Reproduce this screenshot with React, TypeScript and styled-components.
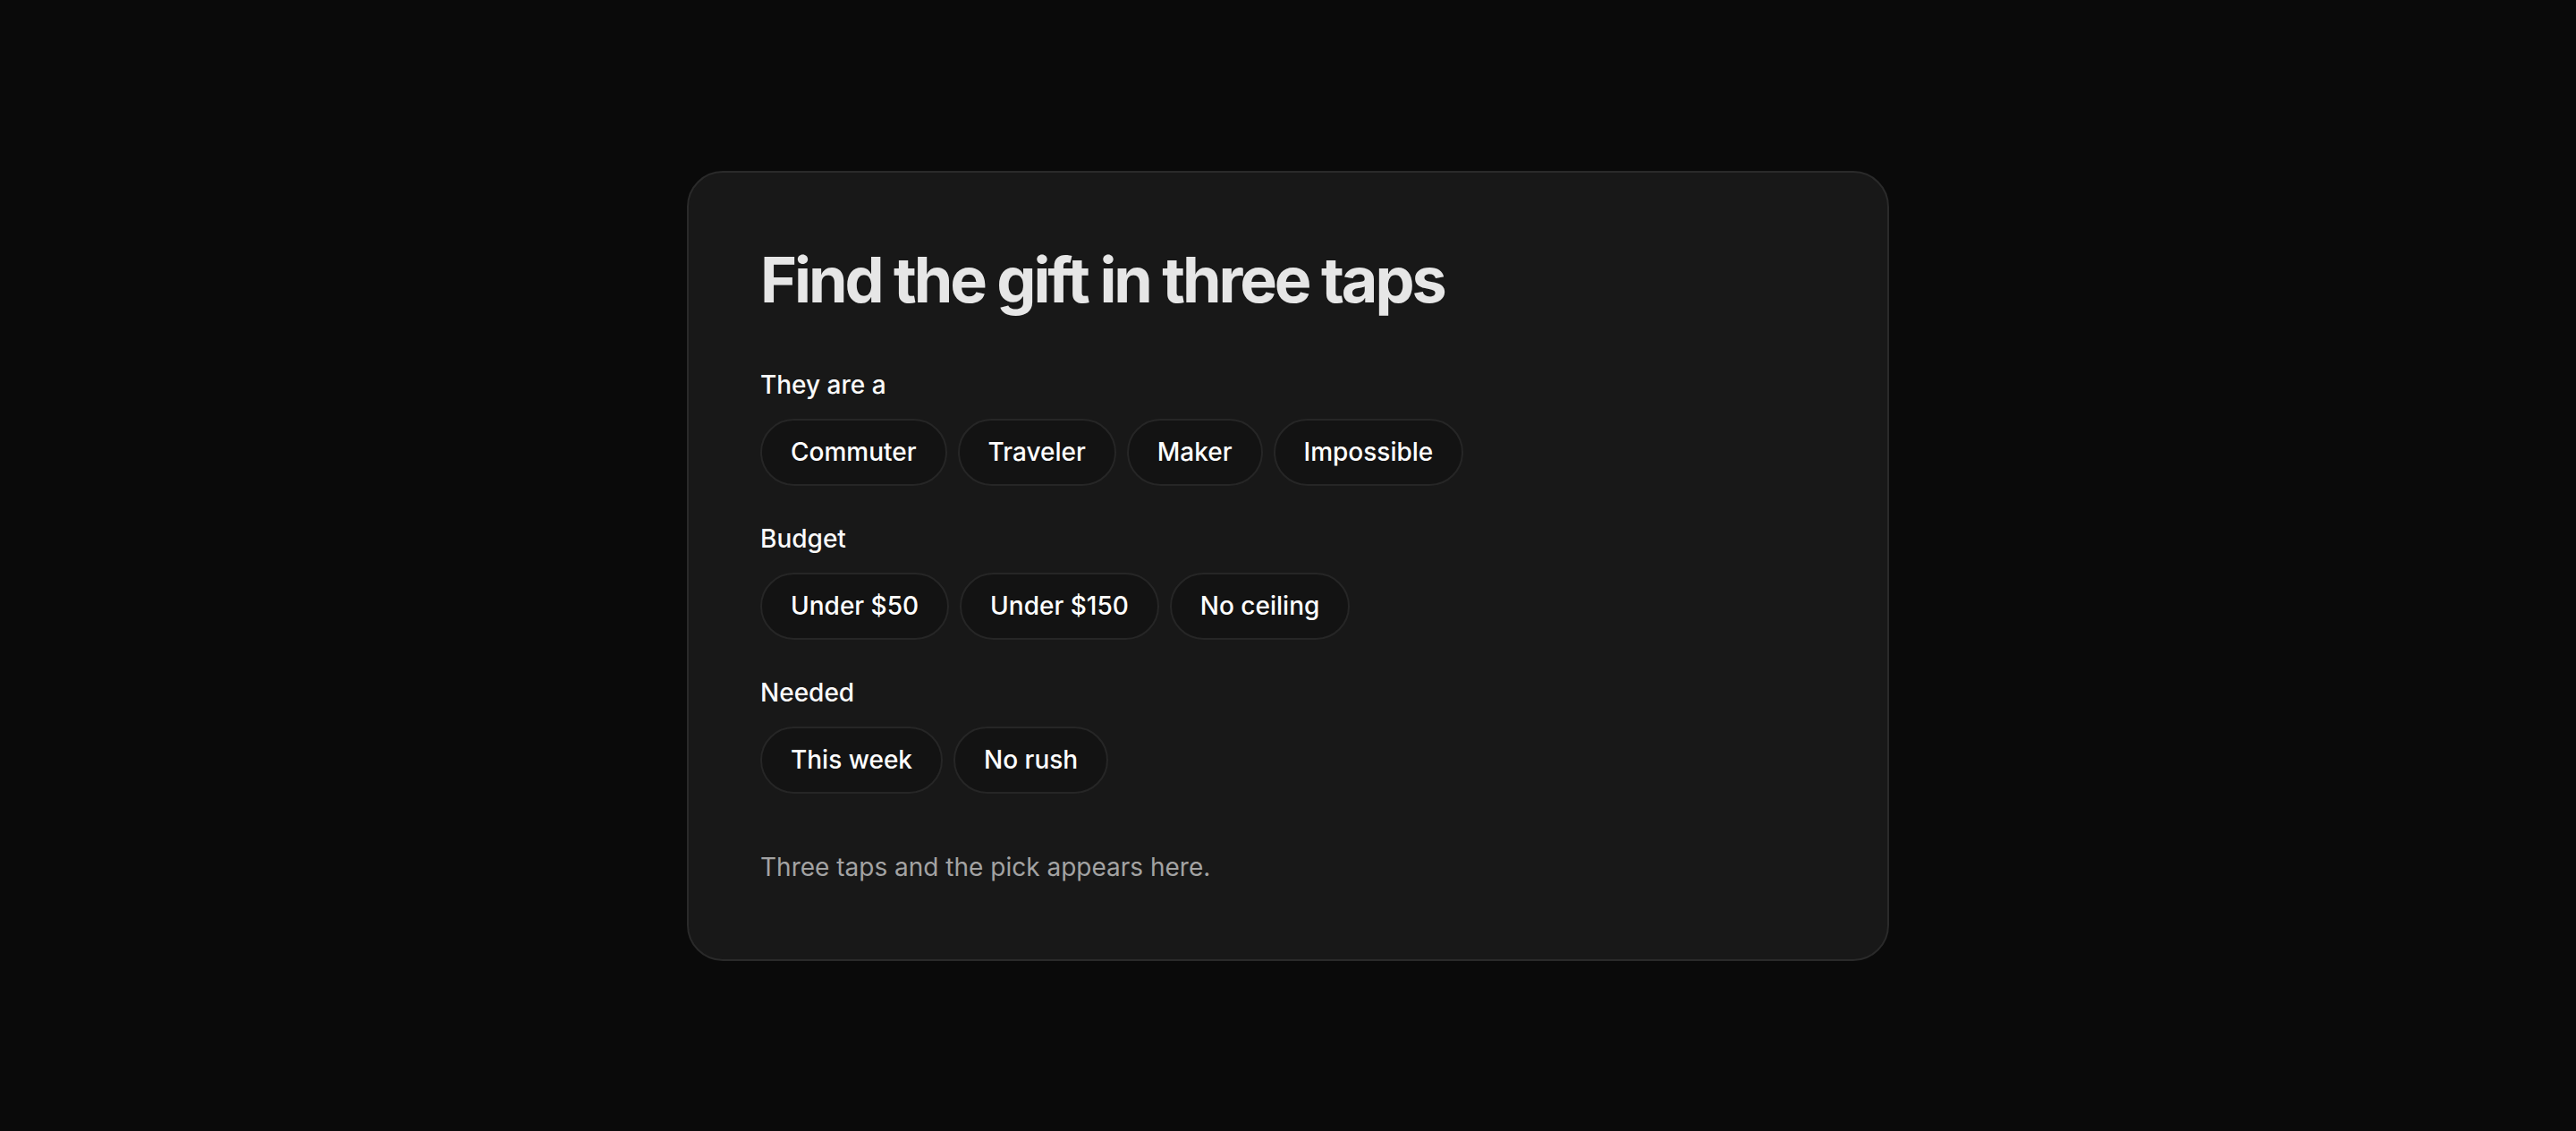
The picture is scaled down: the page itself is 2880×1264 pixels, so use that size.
import React, { useState } from 'react';
import styled, { createGlobalStyle } from 'styled-components';

// Page-wide reset and dark backdrop
const GlobalStyle = createGlobalStyle`
  html, body {
    margin: 0;
    padding: 0;
    background: #0a0a0a;
  }
  body {
    font-family: Inter, "Noto Sans", "Liberation Sans", sans-serif;
    -webkit-font-smoothing: antialiased;
  }
  * {
    box-sizing: border-box;
  }
`;

const Page = styled.main`
  min-height: 1264px;
  display: flex;
  align-items: center;
  justify-content: center;
`;

const Card = styled.section`
  width: 1344px;
  padding: 80px;
  background: #181818;
  border: 2px solid #2a2a2a;
  border-radius: 40px;
  display: flex;
  flex-direction: column;
`;

const Title = styled.h1`
  margin: 0 0 56px;
  font-size: 70px;
  line-height: 79px;
  font-weight: 700;
  letter-spacing: -0.044em;
  color: #e6e6e6;
`;

const Group = styled.div`
  display: flex;
  flex-direction: column;
  gap: 15px;
  margin-bottom: 37px;
`;

const GroupLabel = styled.div`
  font-size: 28px;
  line-height: 45px;
  font-weight: 500;
  color: #fafafa;
`;

const ChipRow = styled.div`
  display: flex;
  flex-wrap: wrap;
  gap: 12px;
`;

const Chip = styled.button<{ $active?: boolean }>`
  font-family: inherit;
  font-size: 28px;
  line-height: 45px;
  font-weight: 500;
  padding: 13px 32px;
  border-radius: 999px;
  border: 2px solid ${(p) => (p.$active ? '#e6e6e6' : '#262626')};
  background: ${(p) => (p.$active ? '#e6e6e6' : '#131313')};
  color: ${(p) => (p.$active ? '#131313' : '#ffffff')};
  cursor: pointer;
`;

const Hint = styled.p`
  margin: 23px 0 0;
  font-size: 28px;
  line-height: 45px;
  font-weight: 400;
  color: #a3a3a3;
`;

const groups = [
  { key: 'who', label: 'They are a', options: ['Commuter', 'Traveler', 'Maker', 'Impossible'] },
  { key: 'budget', label: 'Budget', options: ['Under $50', 'Under $150', 'No ceiling'] },
  { key: 'when', label: 'Needed', options: ['This week', 'No rush'] },
];

export default function App() {
  const [picks, setPicks] = useState<Record<string, string>>({});

  const pick = (group: string, option: string) => {
    setPicks((prev) => ({ ...prev, [group]: prev[group] === option ? '' : option }));
  };

  const done = groups.every((g) => picks[g.key]);

  return (
    <>
      <GlobalStyle />
      <Page>
        <Card>
          <Title>Find the gift in three taps</Title>
          {groups.map((g) => (
            <Group key={g.key}>
              <GroupLabel>{g.label}</GroupLabel>
              <ChipRow>
                {g.options.map((o) => (
                  <Chip key={o} $active={picks[g.key] === o} onClick={() => pick(g.key, o)}>
                    {o}
                  </Chip>
                ))}
              </ChipRow>
            </Group>
          ))}
          <Hint>
            {done
              ? `${picks.who} · ${picks.budget} · ${picks.when}`
              : 'Three taps and the pick appears here.'}
          </Hint>
        </Card>
      </Page>
    </>
  );
}
